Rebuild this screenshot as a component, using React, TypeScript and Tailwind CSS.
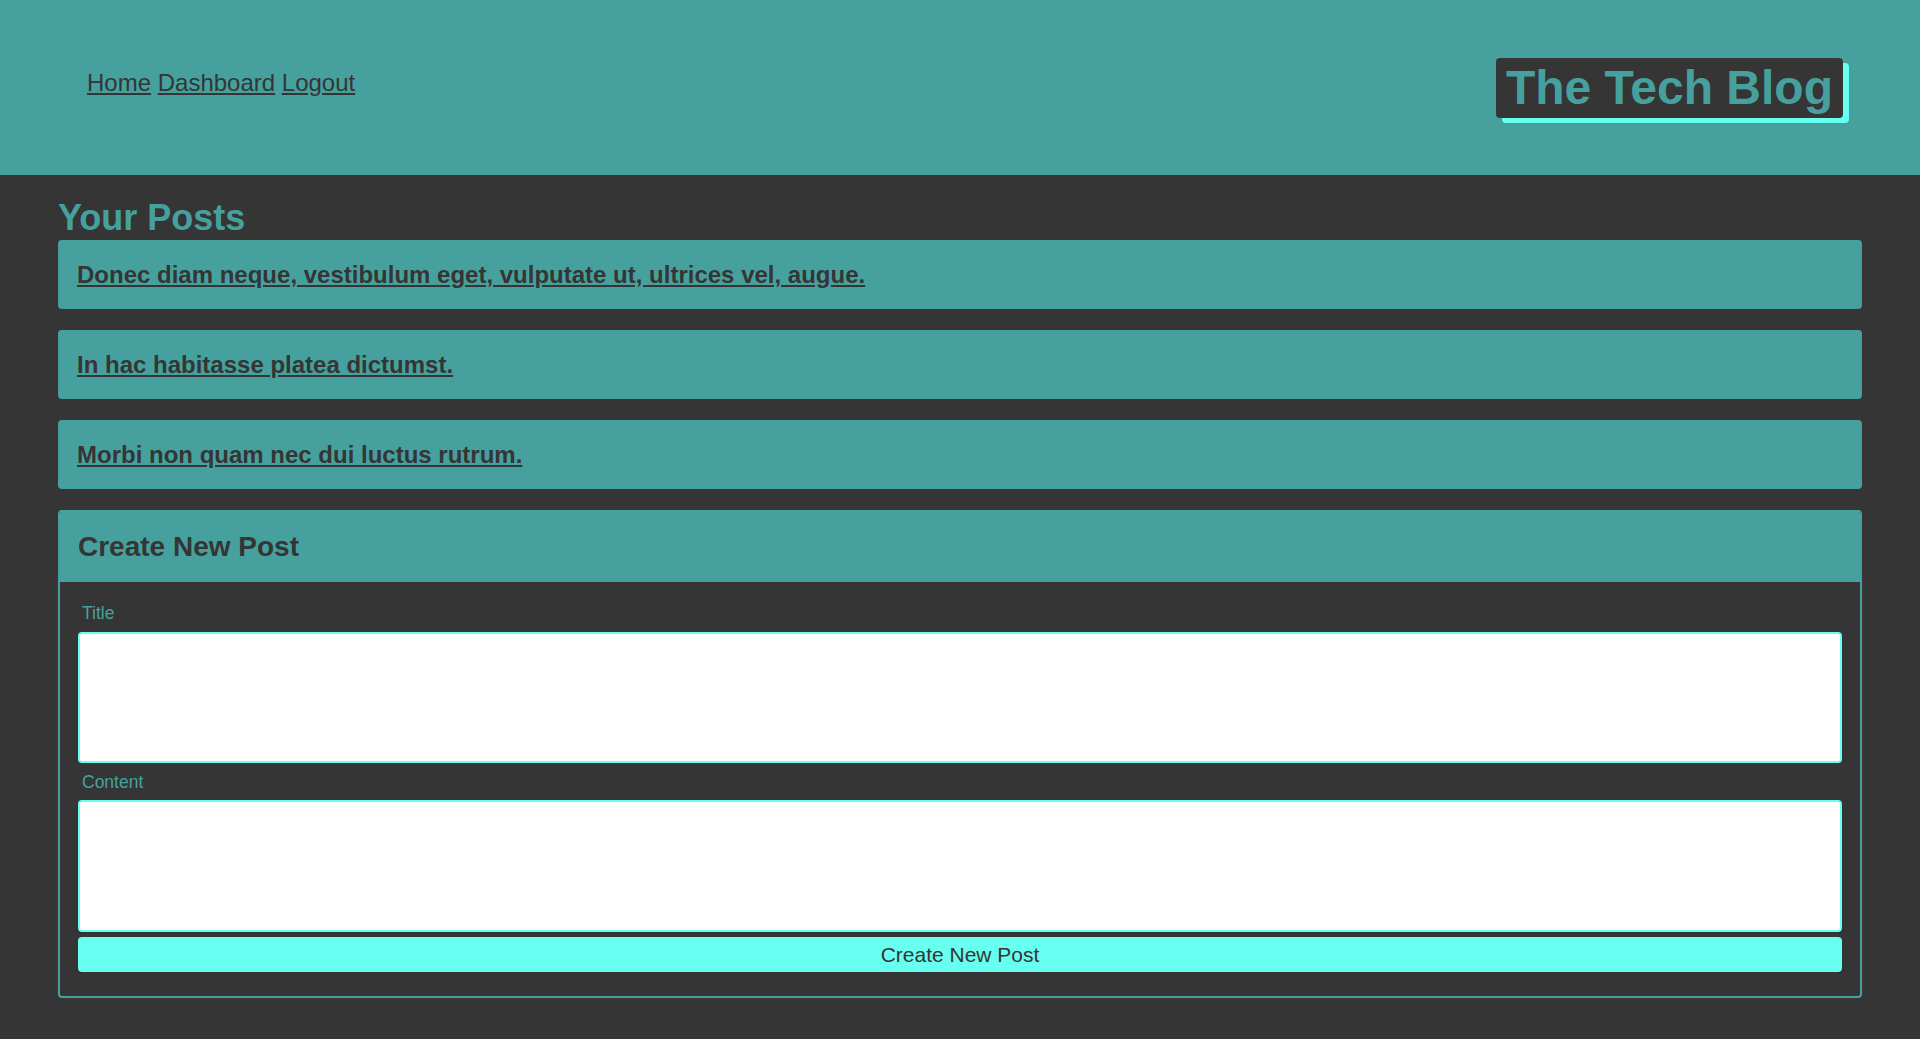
const posts = [
  'Donec diam neque, vestibulum eget, vulputate ut, ultrices vel, augue.',
  'In hac habitasse platea dictumst.',
  'Morbi non quam nec dui luctus rutrum.',
];

export default function App() {
  return (
    <div className="min-h-screen bg-[#353535] font-['Liberation_Sans',Arial,sans-serif] text-[#353535]">
      <header className="flex h-[175px] items-center justify-between bg-[#46a19e] pl-[87px] pr-[77px]">
        <nav className="mb-[10px] text-[24px] leading-[28px]">
          <a href="#" className="underline">
            Home
          </a>{' '}
          <a href="#" className="underline">
            Dashboard
          </a>{' '}
          <a href="#" className="underline">
            Logout
          </a>
        </nav>
        <h1 className="rounded-[4px] bg-[#353535] px-[10px] py-[2px] text-[48px] font-bold leading-[56px] text-[#46a19e] shadow-[6px_5px_0_#66fff0]">
          The Tech Blog
        </h1>
      </header>

      <main className="px-[58px] pt-[22px]">
        <h2 className="mb-[2px] text-[36px] font-bold leading-[41px] text-[#46a19e]">Your Posts</h2>
        <div className="flex flex-col gap-[21px]">
          {posts.map((p) => (
            <div
              key={p}
              className="h-[69px] rounded-[4px] bg-[#46a19e] px-[19px] py-[21px] text-[24px] font-bold leading-[27px]"
            >
              <a href="#" className="underline">
                {p}
              </a>
            </div>
          ))}

          <div className="overflow-hidden rounded-[4px] border-2 border-[#46a19e]">
            <div className="bg-[#46a19e] px-[18px] pb-[19px] pt-[18px]">
              <h3 className="text-[28px] font-bold leading-[33px]">Create New Post</h3>
            </div>
            <form className="flex flex-col px-[18px] pb-[24px] pt-[21px]" onSubmit={(e) => e.preventDefault()}>
              <label className="ml-[4px] text-[17.5px] leading-[20px] text-[#46a19e]">Title</label>
              <input
                type="text"
                className="mt-[9px] h-[131px] w-full rounded-[4px] border-2 border-[#66fff0] bg-white outline-none"
              />
              <label className="ml-[4px] mt-[9px] text-[17.5px] leading-[20px] text-[#46a19e]">Content</label>
              <textarea className="mt-[8px] h-[132px] w-full resize-none rounded-[4px] border-2 border-[#66fff0] bg-white outline-none" />
              <button
                type="submit"
                className="mt-[5px] h-[35px] w-full rounded-[4px] bg-[#66fff0] text-[21px] leading-[24px] text-[#353535]"
              >
                Create New Post
              </button>
            </form>
          </div>
        </div>
      </main>
    </div>
  );
}
